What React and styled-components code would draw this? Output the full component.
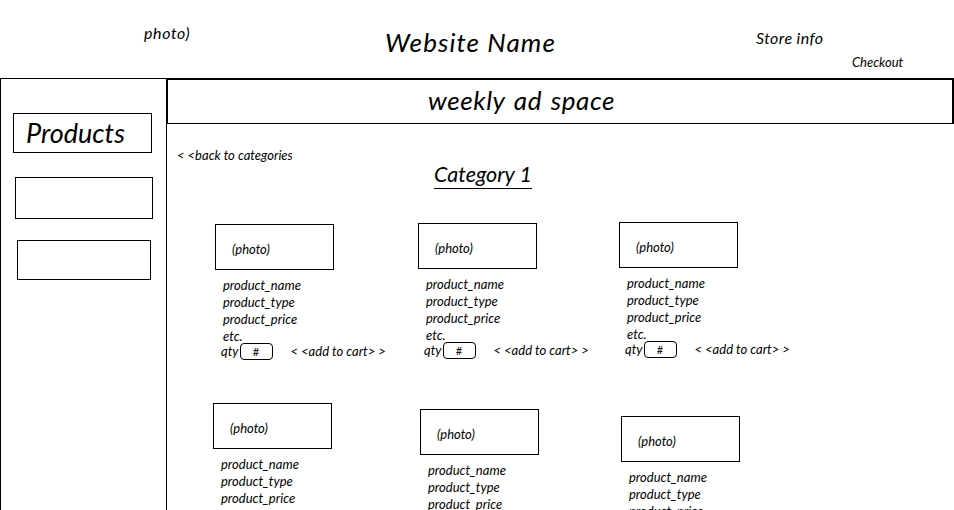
import React from "react";
import styled, { createGlobalStyle } from "styled-components";

const Global = createGlobalStyle`
  html, body { margin: 0; padding: 0; background: #fff; overflow: hidden; }
  body { font-family: Lato, "Open Sans", sans-serif; font-style: italic; color: #000; }
`;

const Page = styled.div`
  width: 954px;
  height: 510px;
  display: flex;
  flex-direction: column;
  overflow: hidden;
`;

const Header = styled.header`
  height: 78px;
  flex: none;
  display: flex;
  align-items: flex-start;
  padding-left: 144px;
`;

const HeaderText = styled.div`
  font-size: ${(p) => p.$size}px;
  line-height: ${(p) => p.$lh}px;
  letter-spacing: ${(p) => p.$ls || 0}px;
  margin-top: ${(p) => p.$top}px;
  margin-left: ${(p) => p.$left || 0}px;
  width: ${(p) => (p.$w ? `${p.$w}px` : "auto")};
  white-space: nowrap;
`;

const StoreCol = styled.div`
  display: flex;
  flex-direction: column;
  align-items: flex-start;
`;

const Body = styled.div`
  flex: 1;
  display: flex;
  min-height: 0;
`;

const Sidebar = styled.aside`
  width: 167px;
  flex: none;
  box-sizing: border-box;
  border-top: 1px solid #000;
  border-left: 1px solid #000;
  border-right: 1px solid #000;
  display: flex;
  flex-direction: column;
  align-items: flex-start;
  padding-top: 34px;
`;

const SideBox = styled.div`
  box-sizing: border-box;
  flex: none;
  width: ${(p) => p.$w}px;
  height: ${(p) => p.$h}px;
  margin-left: ${(p) => p.$x}px;
  margin-top: ${(p) => p.$gap || 0}px;
  border: 1px solid #000;
  font-size: 27px;
  line-height: ${(p) => p.$h - 3}px;
  padding-left: 12px;
`;

const Main = styled.main`
  flex: 1;
  min-width: 0;
  display: block;
`;

const AdBox = styled.div`
  box-sizing: border-box;
  height: 46px;
  border-top: 2px solid #000;
  border-left: 1px solid #000;
  border-right: 2px solid #000;
  border-bottom: 1px solid #000;
  padding-left: 260px;
  font-size: 26px;
  letter-spacing: 0.6px;
  word-spacing: 2px;
  line-height: 41px;
`;

const BackLink = styled.div`
  margin-top: 23px;
  padding-left: 10px;
  font-size: 13px;
  line-height: 17px;
`;

const TitleRow = styled.div`
  padding-left: 267px;
  margin-top: -1px;
`;

const Title = styled.h2`
  display: inline-block;
  margin: 0;
  font-weight: 400;
  font-style: italic;
  font-size: 21.5px;
  line-height: 22px;
  padding-bottom: 3px;
  border-bottom: 1px solid #000;
`;

const Grid = styled.div`
  margin-top: 33px;
  padding-left: 46px;
  display: grid;
  grid-template-columns: repeat(3, 203px);
  grid-auto-rows: 181px;
`;

const Card = styled.div`
  margin-left: ${(p) => p.$dx}px;
  margin-top: ${(p) => p.$dy}px;
  display: flex;
  flex-direction: column;
  align-items: flex-start;
`;

const Photo = styled.div`
  box-sizing: border-box;
  flex: none;
  width: 119px;
  height: 46px;
  border: 1px solid #000;
  display: flex;
  align-items: center;
  padding: 3px 0 0 16px;
  font-size: 13px;
`;

const Details = styled.div`
  margin-top: 7px;
  padding-left: 8px;
  font-size: 13px;
  line-height: 17px;
`;

const Line = styled.div`
  white-space: nowrap;
`;

const QtyRow = styled.div`
  display: flex;
  align-items: center;
  height: 12px;
  margin-left: -2px;
  white-space: nowrap;
`;

const QtyBox = styled.span`
  box-sizing: border-box;
  width: 33px;
  height: 17px;
  border: 1.5px solid #000;
  border-radius: 4px;
  margin-left: 1px;
  display: flex;
  align-items: center;
  justify-content: center;
  font-size: 11px;
  font-style: normal;
`;

const AddCart = styled.span`
  margin-left: 18px;
`;

const cards = [
  { dx: 2, dy: 2, full: true },
  { dx: 2, dy: 1, full: true },
  { dx: 0, dy: 0, full: true },
  { dx: 0, dy: 0 },
  { dx: 4, dy: 6 },
  { dx: 2, dy: 13 },
];

export default function App() {
  return (
    <>
      <Global />
      <Page>
        <Header>
          <HeaderText $size={16} $lh={20} $top={23} $w={241} $ls={0.6}>photo)</HeaderText>
          <HeaderText $size={26} $lh={30} $top={27} $w={371} $ls={1.1}>Website Name</HeaderText>
          <StoreCol>
            <HeaderText $size={16} $lh={20} $top={28} $ls={0.4}>Store info</HeaderText>
            <HeaderText $size={13} $lh={16} $top={6} $left={96}>Checkout</HeaderText>
          </StoreCol>
        </Header>
        <Body>
          <Sidebar>
            <SideBox $w={139} $h={40} $x={12}>Products</SideBox>
            <SideBox $w={138} $h={42} $x={14} $gap={24} />
            <SideBox $w={134} $h={40} $x={16} $gap={21} />
          </Sidebar>
          <Main>
            <AdBox>weekly ad space</AdBox>
            <BackLink>&lt; &lt;back to categories</BackLink>
            <TitleRow>
              <Title>Category 1</Title>
            </TitleRow>
            <Grid>
              {cards.map((c, i) => (
                <Card key={i} $dx={c.dx} $dy={c.dy}>
                  <Photo>(photo)</Photo>
                  <Details>
                    <Line>product_name</Line>
                    <Line>product_type</Line>
                    <Line>product_price</Line>
                    {c.full && (
                      <>
                        <Line>etc.</Line>
                        <QtyRow>
                          qty<QtyBox>#</QtyBox>
                          <AddCart>&lt; &lt;add to cart&gt; &gt;</AddCart>
                        </QtyRow>
                      </>
                    )}
                  </Details>
                </Card>
              ))}
            </Grid>
          </Main>
        </Body>
      </Page>
    </>
  );
}
